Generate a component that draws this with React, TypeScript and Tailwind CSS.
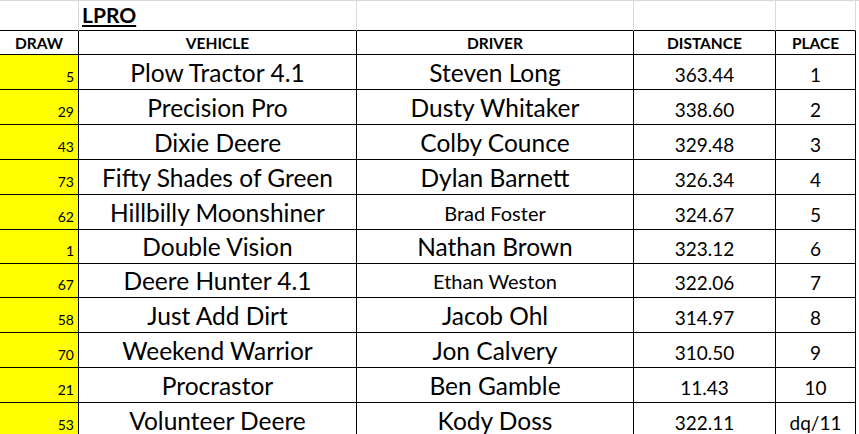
import React from "react";

type Row = {
  draw: string;
  vehicle: string;
  driver: string;
  small?: boolean;
  distance: string;
  place: string;
  h: number;
};

const rows: Row[] = [
  { draw: "5", vehicle: "Plow Tractor 4.1", driver: "Steven Long", distance: "363.44", place: "1", h: 35 },
  { draw: "29", vehicle: "Precision Pro", driver: "Dusty Whitaker", distance: "338.60", place: "2", h: 35 },
  { draw: "43", vehicle: "Dixie Deere", driver: "Colby Counce", distance: "329.48", place: "3", h: 35 },
  { draw: "73", vehicle: "Fifty Shades of Green", driver: "Dylan Barnett", distance: "326.34", place: "4", h: 35 },
  { draw: "62", vehicle: "Hillbilly Moonshiner", driver: "Brad Foster", small: true, distance: "324.67", place: "5", h: 35 },
  { draw: "1", vehicle: "Double Vision", driver: "Nathan Brown", distance: "323.12", place: "6", h: 34 },
  { draw: "67", vehicle: "Deere Hunter 4.1", driver: "Ethan Weston", small: true, distance: "322.06", place: "7", h: 34 },
  { draw: "58", vehicle: "Just Add Dirt", driver: "Jacob Ohl", distance: "314.97", place: "8", h: 35 },
  { draw: "70", vehicle: "Weekend Warrior", driver: "Jon Calvery", distance: "310.50", place: "9", h: 35 },
  { draw: "21", vehicle: "Procrastor", driver: "Ben Gamble", distance: "11.43", place: "10", h: 35 },
  { draw: "53", vehicle: "Volunteer Deere", driver: "Kody Doss", distance: "322.11", place: "dq/11", h: 35 },
];

const font = { fontFamily: "Lato, 'Liberation Sans', sans-serif" };

export default function App() {
  return (
    <div className="w-[859px] h-[434px] overflow-hidden bg-white text-black" style={font}>
      <div className="grid grid-cols-[79px_278px_277px_142px_80px_3px]">
        {/* top row */}
        <div className="h-[31px] border-t border-t-[#d9d9d9] border-r border-r-[#d9d9d9] border-b border-b-black" />
        <div className="h-[31px] border-t border-t-[#d9d9d9] border-r border-r-[#d9d9d9] border-b border-b-black flex items-end pl-[3px] pb-[5px]">
          <span className="text-[21px] font-bold underline leading-none">LPRO</span>
        </div>
        <div className="h-[31px] border-t border-t-[#d9d9d9] border-r border-r-[#d9d9d9] border-b border-b-black" />
        <div className="h-[31px] border-t border-t-[#d9d9d9] border-r border-r-[#d9d9d9] border-b border-b-black" />
        <div className="h-[31px] border-t border-t-[#d9d9d9] border-r border-r-[#d9d9d9] border-b border-b-black" />
        <div className="h-[31px] border-t border-t-[#d9d9d9]" />

        {/* header row */}
        {["DRAW", "VEHICLE", "DRIVER", "DISTANCE", "PLACE"].map((h) => (
          <div
            key={h}
            className="h-[24px] border-r border-b border-black flex items-end justify-center pb-[3px]"
          >
            <span className="text-[15.5px] font-bold leading-none">{h}</span>
          </div>
        ))}
        <div className="h-[24px]" />

        {rows.map((r) => (
          <React.Fragment key={r.draw}>
            <div
              className="bg-[#ffff00] border-r border-b border-black flex items-end justify-end pr-[4px] pb-[5px]"
              style={{ height: r.h }}
            >
              <span className="text-[14px] leading-none">{r.draw}</span>
            </div>
            <div
              className="border-r border-b border-black flex items-end justify-center pb-[4px]"
              style={{ height: r.h }}
            >
              <span className="text-[24.5px] leading-none">{r.vehicle}</span>
            </div>
            <div
              className={
                r.small
                  ? "border-r border-b border-black flex items-end justify-center pb-[6px]"
                  : "border-r border-b border-black flex items-end justify-center pb-[4px]"
              }
              style={{ height: r.h }}
            >
              <span className={r.small ? "text-[20px] leading-none" : "text-[24.5px] leading-none"}>{r.driver}</span>
            </div>
            <div
              className="border-r border-b border-black flex items-end justify-center pb-[5px]"
              style={{ height: r.h }}
            >
              <span className="text-[19px] leading-none">{r.distance}</span>
            </div>
            <div
              className="border-r border-b border-black flex items-end justify-center pb-[5px]"
              style={{ height: r.h }}
            >
              <span className="text-[19px] leading-none">{r.place}</span>
            </div>
            <div style={{ height: r.h }} />
          </React.Fragment>
        ))}
      </div>
    </div>
  );
}
